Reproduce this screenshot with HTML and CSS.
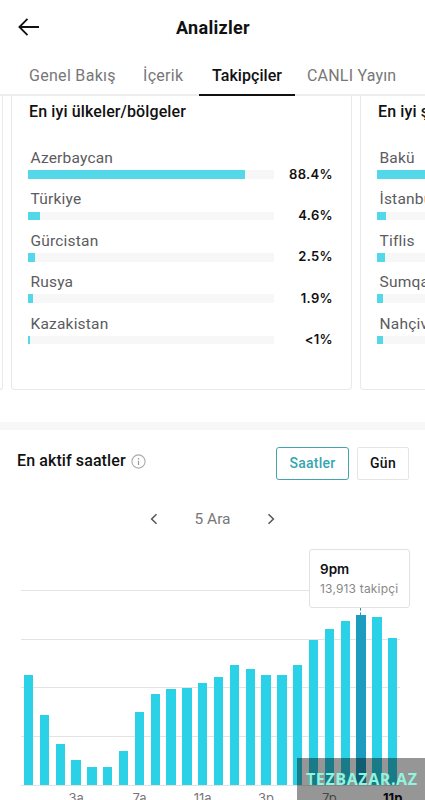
FILE: index.html
```html
<!DOCTYPE html>
<html lang="tr">
<head>
  <meta charset="UTF-8" />
  <meta name="viewport" content="width=device-width, initial-scale=1.0"/>
  <title>Analizler</title>
  <link rel="stylesheet" href="styles.css">
</head>
<body>
  <header class="topbar">
    <svg class="back" width="22" height="18" viewBox="0 0 22 18"><path d="M9.5 .8 1.4 9l8.1 8.2M1.6 9H21" fill="none" stroke="#111" stroke-width="1.8"/></svg>
    <h1>Analizler</h1>
  </header>

  <nav class="tabs">
    <a class="tab tab-overview">Genel Bakış</a>
    <a class="tab tab-content">İçerik</a>
    <a class="tab active">Takipçiler</a>
    <a class="tab tab-live">CANLI Yayın</a>
  </nav>

  <section class="cards">
    <div class="card card-prev"></div>
    <div class="card card-main">
      <h2>En iyi ülkeler/bölgeler</h2>
      <div class="row"><span class="name">Azerbaycan</span><div class="line"><div class="track"><div class="fill" style="width:217px"></div></div><b>88.4%</b></div></div>
      <div class="row"><span class="name">Türkiye</span><div class="line"><div class="track"><div class="fill" style="width:11.5px"></div></div><b>4.6%</b></div></div>
      <div class="row"><span class="name">Gürcistan</span><div class="line"><div class="track"><div class="fill" style="width:6.5px"></div></div><b>2.5%</b></div></div>
      <div class="row"><span class="name">Rusya</span><div class="line"><div class="track"><div class="fill" style="width:5px"></div></div><b>1.9%</b></div></div>
      <div class="row"><span class="name">Kazakistan</span><div class="line"><div class="track"><div class="fill" style="width:1.6px"></div></div><b>&lt;1%</b></div></div>
    </div>
    <div class="card card-main">
      <h2>En iyi şehirler</h2>
      <div class="row"><span class="name">Bakü</span><div class="line"><div class="track"><div class="fill" style="width:120px"></div></div></div></div>
      <div class="row"><span class="name">İstanbul</span><div class="line"><div class="track"><div class="fill" style="width:8.5px"></div></div></div></div>
      <div class="row"><span class="name">Tiflis</span><div class="line"><div class="track"><div class="fill" style="width:8px"></div></div></div></div>
      <div class="row"><span class="name">Sumqayıt</span><div class="line"><div class="track"><div class="fill" style="width:6px"></div></div></div></div>
      <div class="row"><span class="name">Nahçivan</span><div class="line"><div class="track"><div class="fill" style="width:6px"></div></div></div></div>
    </div>
  </section>

  <section class="hours">
    <div class="hours-head">
      <h2>En aktif saatler</h2>
      <svg class="info" width="15" height="15" viewBox="0 0 15 15"><circle cx="7.5" cy="7.5" r="6.6" fill="none" stroke="#aaa" stroke-width="1.1"/><path d="M7.5 6.7v4.2M7.5 4v1.4" stroke="#999" stroke-width="1.2"/></svg>
      <button class="btn btn-on">Saatler</button>
      <button class="btn btn-day">Gün</button>
    </div>

    <div class="date">
      <svg width="8" height="12" viewBox="0 0 8 12"><path d="M6.5 1.2 1.6 6l4.9 4.8" fill="none" stroke="#555" stroke-width="1.5"/></svg>
      <span>5 Ara</span>
      <svg width="8" height="12" viewBox="0 0 8 12"><path d="M1.5 1.2 6.4 6l-4.9 4.8" fill="none" stroke="#555" stroke-width="1.5"/></svg>
    </div>

    <div class="chart">
      <div class="grid"><i></i><i></i><i></i><i></i><i></i></div>
      <div class="bars">
        <div class="bar" style="height:110px"></div>
        <div class="bar" style="height:70.5px"></div>
        <div class="bar" style="height:41px"></div>
        <div class="bar" style="height:25px"></div>
        <div class="bar" style="height:18px"></div>
        <div class="bar" style="height:18.5px"></div>
        <div class="bar" style="height:34px"></div>
        <div class="bar" style="height:73px"></div>
        <div class="bar" style="height:91px"></div>
        <div class="bar" style="height:96px"></div>
        <div class="bar" style="height:97px"></div>
        <div class="bar" style="height:102px"></div>
        <div class="bar" style="height:108px"></div>
        <div class="bar" style="height:120.5px"></div>
        <div class="bar" style="height:116px"></div>
        <div class="bar" style="height:110px"></div>
        <div class="bar" style="height:110px"></div>
        <div class="bar" style="height:120.5px"></div>
        <div class="bar" style="height:145px"></div>
        <div class="bar" style="height:156.5px"></div>
        <div class="bar" style="height:164px"></div>
        <div class="bar bar-peak" style="height:170.5px"></div>
        <div class="bar" style="height:168px"></div>
        <div class="bar" style="height:147px"></div>
      </div>
      <div class="tooltip">
        <strong>9pm</strong>
        <span>13,913 takipçi</span>
      </div>
    </div>
    <div class="axis">
      <span>3a</span><span>7a</span><span>11a</span><span>3p</span><span>7p</span><span class="last">11p</span>
    </div>
  </section>

  <div class="watermark"><span>TEZBAZAR.AZ</span></div>
</body>
</html>
```
FILE: styles.css
```css
* {
  box-sizing: border-box;
}
body {
  margin: 0;
  width: 425px;
  height: 800px;
  overflow: hidden;
  position: relative;
  background: #fff;
  color: #111;
  font-family: Roboto, "Liberation Sans", sans-serif;
}
h1, h2 {
  margin: 0;
  font-weight: 500;
  white-space: nowrap;
}
.topbar {
  display: flex;
  align-items: center;
  height: 54px;
  padding-left: 18px;
}
.topbar h1 {
  margin-left: 136px;
  font-size: 18px;
  font-weight: 700;
  letter-spacing: .3px;
}
.tabs {
  display: flex;
  height: 42px;
  padding-left: 29px;
  border-bottom: 2px solid #eee;
}
.tab {
  height: 42px;
  line-height: 43px;
  font-size: 16px;
  letter-spacing: .3px;
  color: #777;
  white-space: nowrap;
}
.tab-overview {
  width: 114px;
}
.tab-content {
  width: 56px;
}
.tab.active {
  width: 96px;
  text-align: center;
  color: #111;
  font-weight: 500;
  letter-spacing: .05px;
  border-bottom: 2.5px solid #111;
}
.tab-live {
  margin-left: 12px;
  letter-spacing: .2px;
}
.cards {
  display: flex;
  gap: 8px;
  height: 326px;
  overflow: hidden;
}
.card {
  flex: none;
  height: 293.5px;
  border: 1.5px solid #e9e9e9;
  border-top: 0;
  border-radius: 0 0 4px 4px;
}
.card-prev {
  width: 3px;
  border-left: 0;
  border-bottom-left-radius: 0;
}
.card-main {
  width: 341px;
  padding: 6px 0 0 16px;
}
.card h2 {
  height: 45px;
  padding-left: 1px;
  font-size: 16px;
  line-height: 20px;
  letter-spacing: .12px;
}
.row {
  height: 41.4px;
}
.name {
  display: block;
  height: 23px;
  padding-left: 2.5px;
  font-size: 15.5px;
  line-height: 22px;
  letter-spacing: .2px;
  color: #5b5b60;
}
.line {
  display: flex;
  align-items: center;
  height: 9px;
}
.track {
  width: 246px;
  height: 8.5px;
  background: #f7f7f7;
}
.fill {
  height: 100%;
  background: #52d8e8;
}
.line b {
  width: 59px;
  padding-bottom: 2px;
  text-align: right;
  font: 600 13px Inter, sans-serif;
  letter-spacing: .35px;
}
.hours {
  border-top: 8px solid #f7f7f7;
}
.hours-head {
  display: flex;
  height: 66px;
  padding: 17px 16px 0 17px;
}
.hours-head h2 {
  width: 114px;
  font-size: 16px;
  line-height: 28px;
  letter-spacing: .1px;
}
.info {
  margin-top: 7px;
}
.btn {
  width: 52px;
  height: 33px;
  padding: 0;
  margin-left: 8px;
  border: 1px solid #e5e5e5;
  border-radius: 2px;
  background: #fff;
  color: #111;
  font: 500 14px/29px Roboto, sans-serif;
  letter-spacing: .25px;
}
.btn-on {
  width: 73px;
  margin-left: auto;
  border: 1.4px solid #43a5af;
  border-radius: 3px;
  color: #35a5b0;
}
.date {
  display: flex;
  justify-content: center;
  align-items: center;
  gap: 36px;
  height: 45px;
  margin-bottom: 1px;
  color: #777;
  font-size: 15.5px;
}
.chart {
  position: relative;
  height: 243px;
  padding: 48px 25px 0 21px;
}
.grid {
  display: flex;
  flex-direction: column;
  justify-content: space-between;
  height: 195.5px;
}
.grid i {
  height: 1px;
  background: #e3e3e3;
}
/* bars sit on top of the grid lines */
.bars {
  position: absolute;
  left: 24px;
  bottom: 0;
  display: flex;
  align-items: flex-end;
  gap: 6.5px;
}
.bar {
  width: 9.33px;
  background: #2bd1e6;
}
.bar-peak {
  position: relative;
  background: #1c9dc0;
}
.bar-peak::before {
  content: "";
  position: absolute;
  left: 4px;
  top: -7px;
  height: 7px;
  border-left: 1px dashed #3c8fae;
}
.tooltip {
  position: absolute;
  left: 309px;
  top: 7px;
  width: 101px;
  height: 59px;
  padding: 10px 0 0 10px;
  background: #fff;
  border: 1px solid #e2e2e2;
  border-radius: 3px;
  white-space: nowrap;
}
.tooltip strong {
  display: block;
  font: 600 13.5px/18px Inter, sans-serif;
}
.tooltip span {
  display: block;
  margin-top: 2px;
  font: 400 12px/17px Inter, sans-serif;
  letter-spacing: .18px;
  color: #888;
}
.axis {
  display: flex;
  width: 380px;
  margin-left: 44.5px;
  padding-top: 5px;
}
.axis span {
  flex: none;
  width: 63.3px;
  text-align: center;
  font: 400 13px/16px Inter, sans-serif;
  color: #777;
}
.axis .last {
  color: #111;
  font-weight: 700;
}
.watermark {
  position: absolute;
  left: 297px;
  top: 758px;
  width: 128px;
  height: 42px;
  padding-left: 9px;
  background: rgba(0, 0, 0, .41);
  color: #8ff5df;
  font: 700 16px/43px "Open Sans", sans-serif;
  letter-spacing: .6px;
  white-space: nowrap;
}
```
